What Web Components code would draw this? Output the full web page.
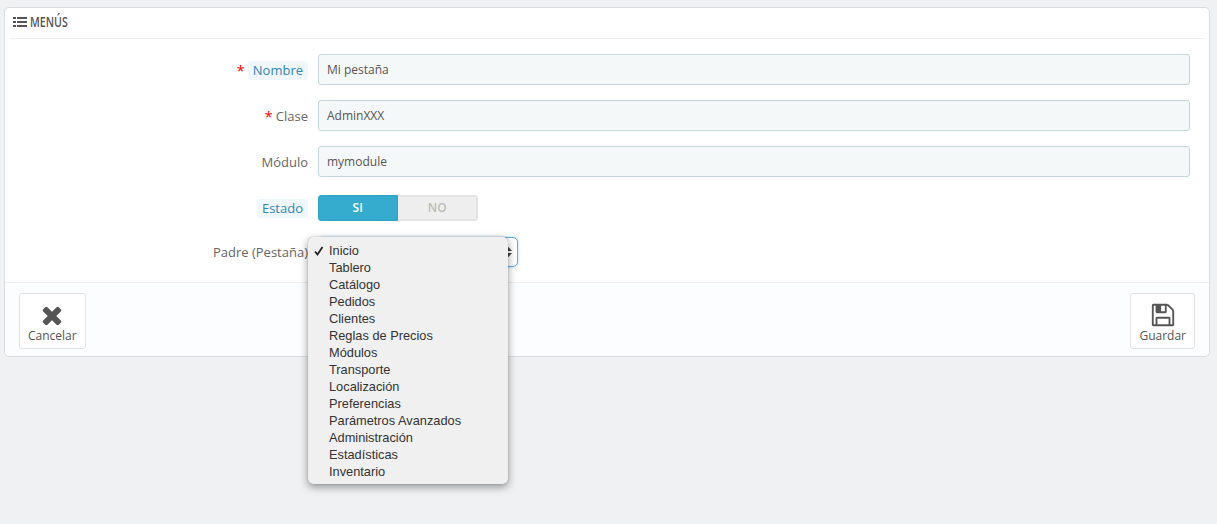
<!DOCTYPE html>
<html lang="es">
<head>
<meta charset="utf-8">
<title>Menús</title>
<style>
 html, body { margin: 0; height: 100%; }
 body {
  background: #eff1f2;
  padding: 7px 7px 0 4px;
  box-sizing: border-box;
  font-family: "Open Sans", sans-serif;
  font-size: 12px;
  color: #555;
 }
</style>
</head>
<body>
<panel-menu titulo="Menús">
 <fila-form etiqueta="Nombre" requerido ayuda><campo-texto valor="Mi pestaña"></campo-texto></fila-form>
 <fila-form etiqueta="Clase" requerido><campo-texto valor="AdminXXX"></campo-texto></fila-form>
 <fila-form etiqueta="Módulo"><campo-texto valor="mymodule"></campo-texto></fila-form>
 <fila-form etiqueta="Estado" ayuda alto="30" ajuste="3"><campo-switch></campo-switch></fila-form>
 <fila-form etiqueta="Padre (Pestaña)" alto="30" ajuste="0"><campo-select></campo-select></fila-form>
 <boton-panel slot="izquierda" texto="Cancelar" icono="cancelar"></boton-panel>
 <boton-panel slot="derecha" texto="Guardar" icono="guardar"></boton-panel>
</panel-menu>
<script>
const ICONOS = {
 cancelar: `<svg width="28" height="28" viewBox="0 0 1792 1792" fill="#555"><path d="M1490 1322q0 40-28 68l-136 136q-28 28-68 28t-68-28l-294-294-294 294q-28 28-68 28t-68-28l-136-136q-28-28-28-68t28-68l294-294-294-294q-28-28-28-68t28-68l136-136q28-28 68-28t68 28l294 294 294-294q28-28 68-28t68 28l136 136q28 28 28 68t-28 68l-294 294 294 294q28 28 28 68z"/></svg>`,
 guardar: `<svg width="26" height="26" viewBox="0 0 1792 1792" fill="#555"><path d="M512 1536h768v-384h-768v384zm896 0h128v-896q0-14-10-38.500t-20-34.500l-281-281q-10-10-34-20t-39-10v416q0 40-28 68t-68 28h-576q-40 0-68-28t-28-68v-416h-128v1280h128v-416q0-40 28-68t68-28h832q40 0 68 28t28 68v416zm-384-928v-320q0-13-9.500-22.500t-22.500-9.500h-192q-13 0-22.500 9.500t-9.500 22.500v320q0 13 9.500 22.500t22.500 9.500h192q13 0 22.500-9.500t9.500-22.500zm640 32v928q0 40-28 68t-68 28h-1344q-40 0-68-28t-28-68v-1344q0-40 28-68t68-28h928q40 0 88 20t76 48l280 280q28 28 48 76t20 88z"/></svg>`
}

class PanelMenu extends HTMLElement {
 constructor() {
  super()
  const shadowRoot = this.attachShadow({ mode: "open" })
  shadowRoot.innerHTML = /* html */
   `<style>
     :host {
      display: block;
      background: #fff;
      border: 1px solid #d8dde0;
      border-radius: 5px;
      box-sizing: border-box;
      height: 350px;
     }
     header {
      height: 30px;
      margin: 0 4px;
      padding-left: 4px;
      border-bottom: 1px solid #eee;
      display: flex;
      align-items: center;
      gap: 3px;
     }
     header svg { position: relative; top: -1px; }
     h2 {
      margin: 0;
      font: 600 14px "Open Sans", sans-serif;
      text-transform: uppercase;
      color: #555;
      transform: scaleX(.76);
      transform-origin: left center;
      position: relative;
      top: -2px;
     }
     main {
      padding: 15px 19px 0 0;
      height: 243px;
      box-sizing: border-box;
      display: flex;
      flex-direction: column;
      gap: 15px;
     }
     footer {
      height: 74px;
      border-top: 1px solid #eee;
      border-radius: 0 0 5px 5px;
      background: #fcfdfe;
      padding: 10px 14px 0;
      box-sizing: border-box;
      display: flex;
      justify-content: space-between;
      align-items: flex-start;
     }
    </style>
    <header>
     <svg width="14" height="12" viewBox="0 0 14 12" fill="#555">
      <rect x="0" y="1" width="3" height="2"/><rect x="4" y="1" width="10" height="2"/>
      <rect x="0" y="5" width="3" height="2"/><rect x="4" y="5" width="10" height="2"/>
      <rect x="0" y="9" width="3" height="2"/><rect x="4" y="9" width="10" height="2"/>
     </svg>
     <h2></h2>
    </header>
    <main><slot></slot></main>
    <footer><slot name="izquierda"></slot><slot name="derecha"></slot></footer>`
  shadowRoot.querySelector("h2").textContent = this.getAttribute("titulo")
 }
}
customElements.define("panel-menu", PanelMenu)

class FilaForm extends HTMLElement {
 constructor() {
  super()
  const shadowRoot = this.attachShadow({ mode: "open" })
  shadowRoot.innerHTML = /* html */
   `<style>
     :host {
      display: grid;
      grid-template-columns: 303px 1fr;
      column-gap: 10px;
      height: 31px;
      font-size: 13px;
      color: #666;
     }
     .etiqueta {
      display: flex;
      justify-content: flex-end;
      align-items: center;
      padding-top: 1px;
      white-space: nowrap;
     }
     .req {
      color: #f00;
      font-size: 15px;
      margin-right: 3px;
      line-height: 1;
     }
     .ayuda span.txt {
      background: #eff7fb;
      color: #3586ae;
      border-radius: 3px;
      padding: 0 5px;
      line-height: 19px;
     }
    </style>
    <div class="etiqueta"><span class="req"></span><span class="txt"></span></div>
    <div><slot></slot></div>`
  const etiqueta = shadowRoot.querySelector(".etiqueta")
  etiqueta.querySelector(".txt").textContent = this.getAttribute("etiqueta")
  if (this.hasAttribute("ayuda")) {
   etiqueta.classList.add("ayuda")
  }
  if (this.hasAttribute("requerido")) {
   etiqueta.querySelector(".req").textContent = "*"
  }
  if (this.hasAttribute("alto")) {
   this.style.height = this.getAttribute("alto") + "px"
  }
  if (this.hasAttribute("ajuste")) {
   etiqueta.style.paddingTop = this.getAttribute("ajuste") + "px"
  }
 }
}
customElements.define("fila-form", FilaForm)

class CampoTexto extends HTMLElement {
 constructor() {
  super()
  const shadowRoot = this.attachShadow({ mode: "open" })
  shadowRoot.innerHTML = /* html */
   `<style>
     :host {
      display: block;
      height: 31px;
      box-sizing: border-box;
      background: #f5f8f9;
      border: 1px solid #c7d6db;
      border-radius: 3px;
      padding: 0 8px;
      line-height: 29px;
      font-size: 12px;
      color: #555;
     }
    </style>
    <span></span>`
  shadowRoot.querySelector("span").textContent = this.getAttribute("valor")
 }
}
customElements.define("campo-texto", CampoTexto)

class CampoSwitch extends HTMLElement {
 constructor() {
  super()
  const shadowRoot = this.attachShadow({ mode: "open" })
  shadowRoot.innerHTML = /* html */
   `<style>
     :host {
      display: flex;
      width: 160px;
      height: 26px;
      margin-top: 3px;
      font-size: 12px;
      font-weight: 600;
      text-align: center;
     }
     div { flex: 1; box-sizing: border-box; }
     .si {
      background: #35acce;
      color: #fff;
      border-radius: 3px 0 0 3px;
      border: 1px solid #2ea3c4;
      line-height: 24px;
     }
     .no {
      background: #eee;
      color: #bbb;
      border: 2px solid #e3e3e3;
      border-left: 0;
      border-radius: 0 3px 3px 0;
      line-height: 22px;
      padding-left: 1px;
     }
    </style>
    <div class="si">SI</div><div class="no">NO</div>`
 }
}
customElements.define("campo-switch", CampoSwitch)

const OPCIONES = ["Inicio", "Tablero", "Catálogo", "Pedidos", "Clientes", "Reglas de Precios", "Módulos", "Transporte", "Localización", "Preferencias", "Parámetros Avanzados", "Administración", "Estadísticas", "Inventario"]

class CampoSelect extends HTMLElement {
 constructor() {
  super()
  const shadowRoot = this.attachShadow({ mode: "open" })
  shadowRoot.innerHTML = /* html */
   `<style>
     :host {
      display: block;
      position: relative;
      width: 200px;
      height: 30px;
      box-sizing: border-box;
      border: 1px solid #6aa9de;
      border-radius: 5px;
      background: #fff;
      box-shadow: 0 0 3px #a9cdea;
     }
     svg.flechas { position: absolute; right: 5px; top: 9px; }
     ul {
      position: absolute;
      left: -11px;
      top: -1px;
      width: 200px;
      box-sizing: border-box;
      margin: 0;
      padding: 5px 0 4px;
      list-style: none;
      background: #f0f0f0;
      border-radius: 5px;
      box-shadow: 0 0 1px rgba(0, 0, 0, .45), 0 3px 9px rgba(0, 0, 0, .4);
      font: 12.800px/17px "Liberation Sans", sans-serif;
      color: #333;
     }
     li { padding-left: 21px; position: relative; white-space: nowrap; }
     li svg { position: absolute; left: 6px; top: 4px; }
    </style>
    <svg class="flechas" width="7" height="10" viewBox="0 0 7 10" fill="#444"><path d="M3.500 0 7 4H0zM3.500 10 0 6h7z"/></svg>
    <ul></ul>`
  const ul = shadowRoot.querySelector("ul")
  OPCIONES.forEach((opcion, i) => {
   const li = document.createElement("li")
   li.textContent = opcion
   if (i == 0) {
    li.insertAdjacentHTML("afterbegin", `<svg width="10" height="10" viewBox="0 0 10 10" fill="none" stroke="#222" stroke-width="1.800"><path d="M1 5.500 3.500 8.500 8.500 1"/></svg>`)
   }
   ul.append(li)
  })
 }
}
customElements.define("campo-select", CampoSelect)

class BotonPanel extends HTMLElement {
 constructor() {
  super()
  const shadowRoot = this.attachShadow({ mode: "open" })
  shadowRoot.innerHTML = /* html */
   `<style>
     :host {
      display: flex;
      flex-direction: column;
      align-items: center;
      height: 56px;
      padding: 8px 8px 0;
      box-sizing: border-box;
      background: #fff;
      border: 1px solid #e3e3e3;
      border-radius: 3px;
      font-size: 12px;
      color: #555;
     }
     .icono { height: 25px; display: flex; align-items: center; }
     svg { display: block; flex: none; }
     span { line-height: 17px; }
    </style>
    <div class="icono"></div><span></span>`
  shadowRoot.querySelector(".icono").innerHTML = ICONOS[this.getAttribute("icono")]
  shadowRoot.querySelector("span").textContent = this.getAttribute("texto")
 }
}
customElements.define("boton-panel", BotonPanel)
</script>
</body>
</html>
